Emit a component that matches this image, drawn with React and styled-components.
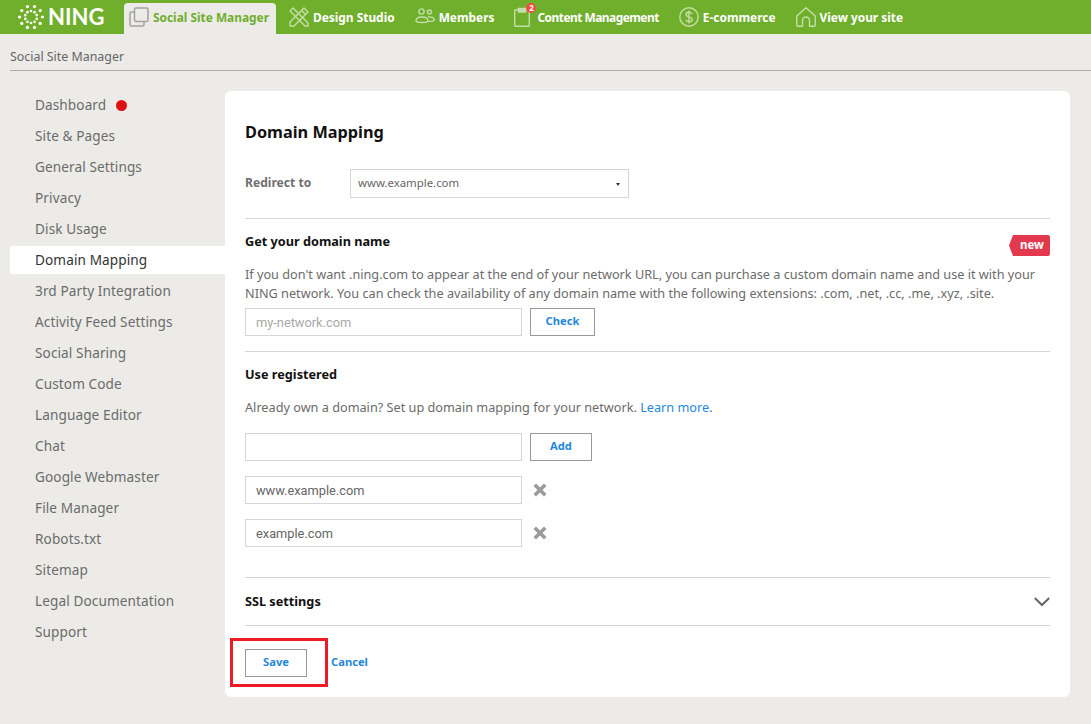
import React from 'react';
import styled, { createGlobalStyle } from 'styled-components';

const GlobalStyle = createGlobalStyle`
  html, body {
    margin: 0;
    padding: 0;
    background: #ecebe8;
    font-family: "Noto Sans", "Liberation Sans", sans-serif;
  }
  * { box-sizing: border-box; }
`;

const sideLinks = [
  'Dashboard', 'Site & Pages', 'General Settings', 'Privacy', 'Disk Usage', 'Domain Mapping',
  '3rd Party Integration', 'Activity Feed Settings', 'Social Sharing', 'Custom Code',
  'Language Editor', 'Chat', 'Google Webmaster', 'File Manager', 'Robots.txt', 'Sitemap',
  'Legal Documentation', 'Support',
];

const LogoDots = () => {
  const dots = [];
  for (let i = 0; i < 10; i++) {
    const a = (i / 10) * Math.PI * 2;
    dots.push(<circle key={`o${i}`} cx={13 + Math.cos(a) * 11.4} cy={13 + Math.sin(a) * 11} r="1.6" fill="#fff" />);
    dots.push(<circle key={`i${i}`} cx={13 + Math.cos(a + 0.31) * 6} cy={13 + Math.sin(a + 0.31) * 6} r="1.3" fill="#fff" />);
  }
  return <svg width="26" height="26" viewBox="0 0 26 26">{dots}</svg>;
};

const PagesIcon = () => (
  <svg width="20" height="20" viewBox="0 0 20 20" fill="none" stroke="#a3a3a1" strokeWidth="1.5">
    <rect x="5.5" y="1" width="13.5" height="13.5" rx="1.5" />
    <path d="M5.5 5H2.5A1.5 1.5 0 0 0 1 6.5V17.5A1.5 1.5 0 0 0 2.5 19H13.5A1.5 1.5 0 0 0 15 17.500V14.500" />
  </svg>
);

const PencilRulerIcon = () => (
  <svg width="20" height="20" viewBox="0 0 20 20" fill="none" stroke="#c5dfa9" strokeWidth="1.4" strokeLinejoin="round">
    <path d="M1 4L4 1L19 16L19 19L16 19Z" />
    <path d="M15 1L19 5L5 19L1 19L1 15Z" />
    <path d="M12.500 3.500L16.500 7.500" />
  </svg>
);

const PeopleIcon = () => (
  <svg width="20" height="17" viewBox="0 0 20 17" fill="none" stroke="#c5dfa9" strokeWidth="1.4">
    <circle cx="6.500" cy="3.500" r="2.600" />
    <circle cx="14.500" cy="4" r="2" />
    <path d="M1 13C1 10 4 9 7 9S13 10 13 13C13 15 1 15 1 13Z" />
    <path d="M13 9C16 8.500 19.300 9.500 19.300 11.800C19.300 13 17 13.500 13.500 13.500" />
  </svg>
);

const ClipboardIcon = () => (
  <svg width="16" height="20" viewBox="0 0 16 20" fill="none" stroke="#c5dfa9" strokeWidth="1.4">
    <path d="M4.500 3H1.500A.8.8 0 0 0 .7 3.800V18.500A.8.8 0 0 0 1.500 19.300H14.500A.8.8 0 0 0 15.300 18.500V3.800A.8.8 0 0 0 14.500 3H11.500" />
    <path d="M4.500 1.500H11.500V5H4.500Z" fill="#c5dfa9" />
  </svg>
);

const DollarIcon = () => (
  <svg width="20" height="20" viewBox="0 0 20 20" fill="none" stroke="#c5dfa9" strokeWidth="1.4">
    <circle cx="10" cy="10" r="9.200" />
    <path d="M13 7C12.500 5.500 11 5.200 10 5.200C8.300 5.200 7 6 7 7.500C7 10.500 13.200 9.300 13.200 12.500C13.200 14 11.700 14.800 10 14.800C8.500 14.800 7.300 14 6.900 12.800M10 3.500V16.500" />
  </svg>
);

const HomeIcon = () => (
  <svg width="20" height="20" viewBox="0 0 20 20" fill="none" stroke="#c5dfa9" strokeWidth="1.4" strokeLinejoin="round">
    <path d="M.8 9L10 .8L19.200 9V18A1.200 1.200 0 0 1 18 19.200H13.500V13.500A3.500 3.500 0 0 0 6.500 13.500V19.200H2A1.200 1.200 0 0 1 .8 18Z" />
  </svg>
);

const CrossIcon = () => (
  <svg width="14" height="14" viewBox="0 0 14 14">
    <path d="M3 .5L7 4.500L11 .5L13.500 3L9.500 7L13.500 11L11 13.500L7 9.500L3 13.500L.5 11L4.500 7L.5 3Z" fill="#9b9b9b" />
  </svg>
);

const Chevron = () => (
  <svg width="16" height="10" viewBox="0 0 16 10" fill="none" stroke="#666" strokeWidth="2">
    <path d="M.8 1L8 8L15.200 1" />
  </svg>
);

export default function App() {
  return (
    <Page>
      <GlobalStyle />
      <TopBar>
        <Logo>
          <LogoDots />
          <LogoWord>NING</LogoWord>
        </Logo>
        <NavTab>
          <PagesIcon />
          <span>Social Site Manager</span>
        </NavTab>
        <NavItem><PencilRulerIcon /><span>Design Studio</span></NavItem>
        <NavItem><PeopleIcon /><span>Members</span></NavItem>
        <NavItem>
          <ClipboardIcon />
          <NotifyBadge>2</NotifyBadge>
          <NavLabelWide>Content Management</NavLabelWide>
        </NavItem>
        <NavItem><DollarIcon /><span>E-commerce</span></NavItem>
        <NavItem><HomeIcon /><span>View your site</span></NavItem>
      </TopBar>

      <Breadcrumb>Social Site Manager</Breadcrumb>

      <Main>
        <Sidebar>
          {sideLinks.map((label) => (
            <SideLink key={label} $active={label === 'Domain Mapping'}>
              {label}
              {label === 'Dashboard' && <RedDot />}
            </SideLink>
          ))}
        </Sidebar>

        <Card>
          <Title>Domain Mapping</Title>

          <RedirectRow>
            <RedirectLabel>Redirect to</RedirectLabel>
            <SelectBox>
              www.example.com
              <Caret />
            </SelectBox>
          </RedirectRow>

          <Section $top={14} $bottom={15}>
            <SectionHead>
              <SectionTitle>Get your domain name</SectionTitle>
              <NewTag>new</NewTag>
            </SectionHead>
            <Para>
              If you don't want .ning.com to appear at the end of your network URL, you can purchase a custom domain name and use it with your NING network. You can check the availability of any domain name with the following extensions: .com, .net, .cc, .me, .xyz, .site.
            </Para>
            <FieldRow>
              <TextField $placeholder>my-network.com</TextField>
              <OutlineButton $width={65}>Check</OutlineButton>
            </FieldRow>
          </Section>

          <Section $top={14} $bottom={30}>
            <SectionTitle>Use registered</SectionTitle>
            <RegisteredPara>
              Already own a domain? Set up domain mapping for your network. <BlueLink>Learn more</BlueLink>.
            </RegisteredPara>
            <FieldStack>
              <FieldRow>
                <TextField />
                <OutlineButton $width={62}>Add</OutlineButton>
              </FieldRow>
              <FieldRow>
                <TextField>www.example.com</TextField>
                <RemoveBtn><CrossIcon /></RemoveBtn>
              </FieldRow>
              <FieldRow>
                <TextField>example.com</TextField>
                <RemoveBtn><CrossIcon /></RemoveBtn>
              </FieldRow>
            </FieldStack>
          </Section>

          <SslRow>
            <SectionTitle>SSL settings</SectionTitle>
            <Chevron />
          </SslRow>

          <Actions>
            <SaveWrap>
              <OutlineButton $width={62}>Save</OutlineButton>
            </SaveWrap>
            <CancelLink>Cancel</CancelLink>
          </Actions>
        </Card>
      </Main>
    </Page>
  );
}

const Page = styled.div`
  width: 1091px;
  height: 724px;
  overflow: hidden;
  background: #ecebe8;
`;

const TopBar = styled.header`
  height: 34px;
  background: #70af2c;
  display: flex;
  align-items: flex-end;
  gap: 6px;
`;

const Logo = styled.div`
  width: 124px;
  height: 34px;
  padding: 0 0 1px 18px;
  display: flex;
  align-items: center;
  gap: 4px;
  margin-right: -6px;
`;

const LogoWord = styled.span`
  font-family: "Lato", sans-serif;
  font-size: 22px;
  font-weight: 700;
  line-height: 34px;
  color: #fff;
`;

const NavTab = styled.div`
  height: 31px;
  padding: 0 7px 4px 5px;
  background: #ecebe8;
  border-radius: 4px 4px 0 0;
  display: flex;
  align-items: center;
  gap: 4px;
  color: #70af2c;
  font-size: 11.9px;
  font-weight: 700;
  white-space: nowrap;
`;

const NavItem = styled.div`
  position: relative;
  height: 31px;
  padding: 0 7px 4px;
  display: flex;
  align-items: center;
  gap: 4px;
  color: #fff;
  font-size: 11.9px;
  font-weight: 700;
  white-space: nowrap;
`;

const NavLabelWide = styled.span`
  margin-left: 3px;
  letter-spacing: -0.5px;
`;

const NotifyBadge = styled.span`
  position: absolute;
  left: 19px;
  top: 0;
  width: 10px;
  height: 10px;
  border-radius: 50%;
  background: #f04e43;
  color: #fff;
  font-size: 8px;
  line-height: 10px;
  text-align: center;
`;

const Breadcrumb = styled.div`
  margin-left: 10px;
  height: 37px;
  border-bottom: 1px solid #aeaeac;
  padding-top: 14px;
  font-size: 12.4px;
  line-height: 17px;
  color: #666;
`;

const Main = styled.div`
  display: flex;
  align-items: flex-start;
  padding: 20px 0 0 10px;
`;

const Sidebar = styled.nav`
  width: 215px;
  display: flex;
  flex-direction: column;
  gap: 3px;
`;

const SideLink = styled.div`
  height: 28px;
  padding: 0 0 2px 25px;
  display: flex;
  align-items: center;
  font-size: 13.6px;
  letter-spacing: 0.1px;
  color: ${({ $active }) => ($active ? '#333' : '#6b6b6b')};
  background: ${({ $active }) => ($active ? '#fff' : 'transparent')};
`;

const RedDot = styled.span`
  width: 11px;
  height: 11px;
  margin: 2px 0 0 10px;
  border-radius: 50%;
  background: #e01010;
`;

const Card = styled.main`
  width: 845px;
  height: 606px;
  padding: 0 20px;
  background: #fff;
  border-radius: 6px;
`;

const Title = styled.h1`
  margin: 0;
  padding-top: 28px;
  font-size: 16.3px;
  line-height: 26px;
  font-weight: 700;
  color: #111;
`;

const RedirectRow = styled.div`
  margin-top: 24px;
  display: flex;
  align-items: center;
  padding-bottom: 20px;
`;

const RedirectLabel = styled.div`
  width: 105px;
  padding-bottom: 2px;
  font-size: 12.1px;
  font-weight: 700;
  color: #707070;
`;

const SelectBox = styled.div`
  position: relative;
  width: 279px;
  height: 29px;
  padding: 0 0 2px 7px;
  display: flex;
  align-items: center;
  border: 1px solid #d6d6d6;
  font-size: 11.4px;
  color: #666;
`;

const Caret = styled.span`
  position: absolute;
  right: 8px;
  top: 13px;
  border-left: 2.5px solid transparent;
  border-right: 2.5px solid transparent;
  border-top: 3px solid #333;
`;

const Section = styled.section`
  border-top: 1px solid #d6d6d6;
  padding-top: ${({ $top }) => $top}px;
  padding-bottom: ${({ $bottom }) => $bottom}px;
`;

const SectionHead = styled.div`
  position: relative;
`;

const SectionTitle = styled.h2`
  margin: 0;
  padding-bottom: 2px;
  font-size: 12.7px;
  line-height: 16px;
  font-weight: 700;
  color: #111;
`;

const NewTag = styled.span`
  position: absolute;
  right: 0;
  top: 2px;
  width: 41px;
  height: 21px;
  padding-left: 11px;
  background: #e3394f;
  clip-path: polygon(4px 0, 100% 0, 100% 100%, 4px 100%, 0 50%);
  border-radius: 2px;
  color: #fff;
  font-size: 11.500px;
  font-weight: 700;
  line-height: 20px;
`;

const Para = styled.p`
  margin: 14px 0 5px;
  font-size: 12.7px;
  line-height: 19px;
  color: #6b6b6b;
`;

const RegisteredPara = styled(Para)`
  margin: 14px 0 16px;
`;

const FieldRow = styled.div`
  display: flex;
  align-items: center;
  gap: 8px;
`;

const FieldStack = styled.div`
  display: flex;
  flex-direction: column;
  gap: 15px;
`;

const TextField = styled.div`
  width: 277px;
  height: 28px;
  padding-left: 10px;
  display: flex;
  align-items: center;
  border: 1px solid #d6d6d6;
  font-family: "Roboto", sans-serif;
  font-size: 12.8px;
  color: ${({ $placeholder }) => ($placeholder ? '#a8a8a8' : '#666')};
`;

const OutlineButton = styled.button`
  width: ${({ $width }) => $width}px;
  height: 28px;
  padding: 0 0 3px;
  background: #fff;
  border: 1px solid #999;
  font-family: "Noto Sans", sans-serif;
  font-size: 11.2px;
  font-weight: 700;
  color: #1f88dc;
`;

const RemoveBtn = styled.span`
  margin-left: 3px;
  display: flex;
`;

const BlueLink = styled.span`
  color: #1f88dc;
`;

const SslRow = styled.div`
  height: 49px;
  border-top: 1px solid #d6d6d6;
  border-bottom: 1px solid #d6d6d6;
  display: flex;
  align-items: center;
  justify-content: space-between;
`;

const Actions = styled.div`
  margin-top: 23px;
  display: flex;
  align-items: center;
  gap: 24px;
`;

const SaveWrap = styled.div`
  position: relative;

  &::after {
    content: '';
    position: absolute;
    left: -15px;
    right: -21px;
    top: -11px;
    bottom: -10px;
    border: 3px solid #ed1c24;
  }
`;

const CancelLink = styled.span`
  padding-bottom: 4px;
  font-size: 11.2px;
  font-weight: 700;
  color: #1f88dc;
`;
